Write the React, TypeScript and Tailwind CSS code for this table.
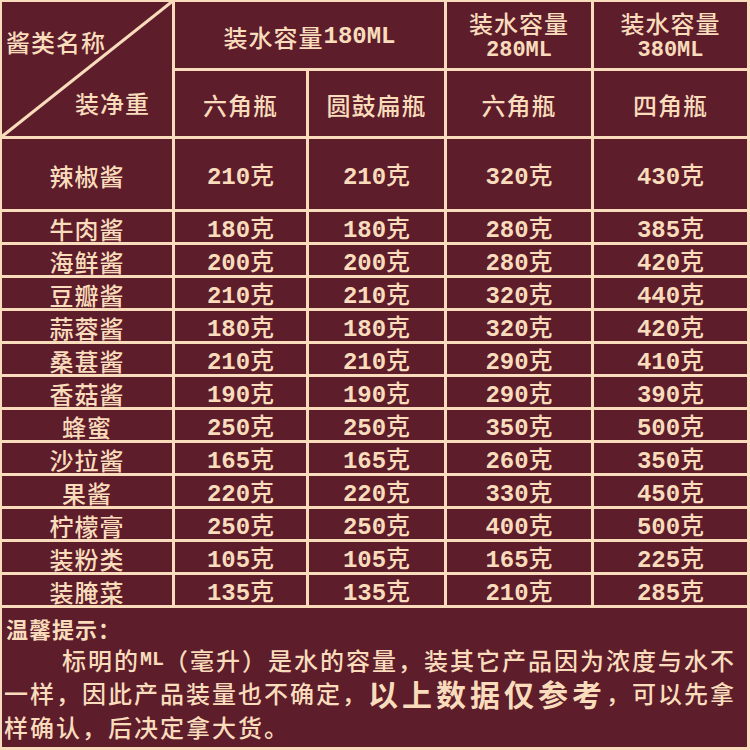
import type { ReactNode } from 'react';

const rows: [string, string, string, string, string][] = [
  ['牛肉酱', '180', '180', '280', '385'],
  ['海鲜酱', '200', '200', '280', '420'],
  ['豆瓣酱', '210', '210', '320', '440'],
  ['蒜蓉酱', '180', '180', '320', '420'],
  ['桑葚酱', '210', '210', '290', '410'],
  ['香菇酱', '190', '190', '290', '390'],
  ['蜂蜜', '250', '250', '350', '500'],
  ['沙拉酱', '165', '165', '260', '350'],
  ['果酱', '220', '220', '330', '450'],
  ['柠檬膏', '250', '250', '400', '500'],
  ['装粉类', '105', '105', '165', '225'],
  ['装腌菜', '135', '135', '210', '285'],
];

const cjk = { fontFamily: '"Noto Sans CJK SC", "Noto Sans", sans-serif' };
const mono = { fontFamily: '"Liberation Mono", "Noto Sans CJK SC", monospace' };

function Cell({ children, className = '' }: { children: ReactNode; className?: string }) {
  return (
    <div className={`flex items-center justify-center bg-[#5d1d2b] pt-[3px] text-[24px] font-medium text-[#f9dcbc] ${className}`}>
      {children}
    </div>
  );
}

function Weight({ value }: { value: string }) {
  return (
    <span className="leading-none">
      <span style={mono} className="font-bold">{value}</span>
      <span style={cjk}>克</span>
    </span>
  );
}

export default function App() {
  return (
    <div className="h-[750px] w-[750px] bg-[#f9dcbc] pb-[3px] pl-[2px] pr-[3px] pt-[2px]" style={cjk}>
      <div className="grid grid-cols-[170px_131px_135px_144px_153px] grid-rows-[66px_65px_70px_repeat(12,30px)_139px] gap-[3px]">
        <div className="relative row-span-2 bg-[#5d1d2b] text-[24px] font-medium leading-none text-[#f9dcbc]">
          <svg className="absolute inset-0 overflow-visible" width="170" height="134" viewBox="0 0 170 134">
            <line x1="-2" y1="136" x2="172" y2="-2" stroke="#f9dcbc" strokeWidth="3" />
          </svg>
          <div className="absolute left-[4px] top-[28px] tracking-[1px]">酱类名称</div>
          <div className="absolute left-[73px] top-[89px] tracking-[1px]">装净重</div>
        </div>
        <Cell className="col-span-2 leading-none tracking-[1px]">
          装水容量<span style={mono} className="font-bold tracking-normal">180ML</span>
        </Cell>
        <Cell className="flex-col tracking-[1px]">
          <span className="block leading-[28px]">装水容量</span>
          <span style={mono} className="block text-[22px] font-bold leading-[28px] tracking-normal">280ML</span>
        </Cell>
        <Cell className="flex-col tracking-[1px]">
          <span className="block leading-[28px]">装水容量</span>
          <span style={mono} className="block text-[22px] font-bold leading-[28px] tracking-normal">380ML</span>
        </Cell>
        <Cell className="leading-none tracking-[1px]">六角瓶</Cell>
        <Cell className="leading-none tracking-[1px]">圆鼓扁瓶</Cell>
        <Cell className="leading-none tracking-[1px]">六角瓶</Cell>
        <Cell className="leading-none tracking-[1px]">四角瓶</Cell>

        <Cell className="leading-none tracking-[1px]">辣椒酱</Cell>
        <Cell><Weight value="210" /></Cell>
        <Cell><Weight value="210" /></Cell>
        <Cell><Weight value="320" /></Cell>
        <Cell><Weight value="430" /></Cell>

        {rows.map(([name, a, b, c, d]) => (
          <div key={name} className="contents">
            <Cell className="leading-none tracking-[1px]">{name}</Cell>
            <Cell><Weight value={a} /></Cell>
            <Cell><Weight value={b} /></Cell>
            <Cell><Weight value={c} /></Cell>
            <Cell><Weight value={d} /></Cell>
          </div>
        ))}

        <div className="col-span-5 bg-[#5d1d2b] pt-[6px] font-medium text-[#f9dcbc] whitespace-nowrap">
          <div className="flex h-[28px] items-center pl-[4px] text-[22px] font-bold leading-none tracking-[1px]">
            温馨提示：
          </div>
          <div className="flex h-[36px] items-center pl-[60px] text-[24px] leading-none tracking-[2px]">
            标明的<span style={mono} className="text-[20px] font-bold tracking-normal">ML</span>（毫升）是水的容量，装其它产品因为浓度与水不
          </div>
          <div className="flex h-[30px] items-center pl-[2px] text-[24px] leading-none tracking-[2px]">
            <span>一样，因此产品装量也不确定，</span>
            <span className="text-[30px] font-bold leading-none tracking-[4px]">以上数据仅参考</span>
            <span>，可以先拿</span>
          </div>
          <div className="flex h-[38px] items-center pl-[2px] text-[24px] leading-none tracking-[2px]">
            样确认，后决定拿大货。
          </div>
        </div>
      </div>
    </div>
  );
}
